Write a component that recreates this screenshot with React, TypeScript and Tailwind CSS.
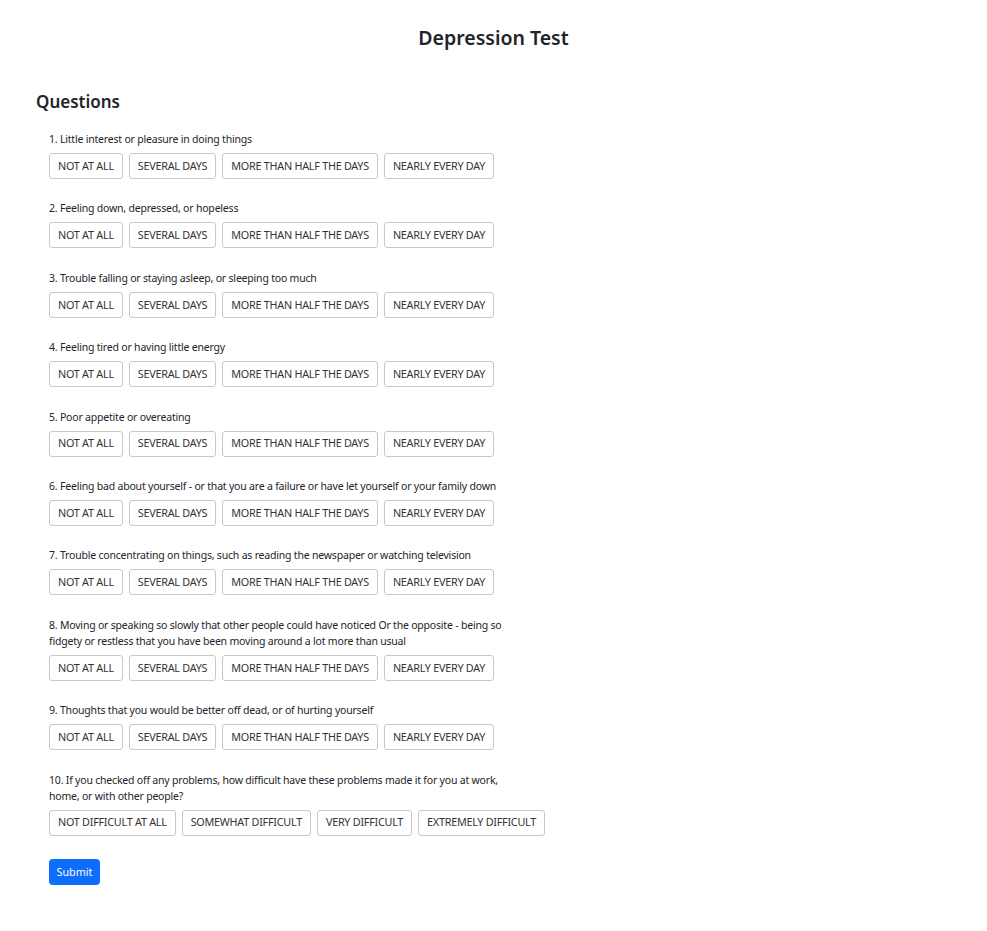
const freq = ["NOT AT ALL", "SEVERAL DAYS", "MORE THAN HALF THE DAYS", "NEARLY EVERY DAY"];
const diff = ["NOT DIFFICULT AT ALL", "SOMEWHAT DIFFICULT", "VERY DIFFICULT", "EXTREMELY DIFFICULT"];

const questions = [
  "Little interest or pleasure in doing things",
  "Feeling down, depressed, or hopeless",
  "Trouble falling or staying asleep, or sleeping too much",
  "Feeling tired or having little energy",
  "Poor appetite or overeating",
  "Feeling bad about yourself - or that you are a failure or have let yourself or your family down",
  "Trouble concentrating on things, such as reading the newspaper or watching television",
  "Moving or speaking so slowly that other people could have noticed Or the opposite - being so fidgety or restless that you have been moving around a lot more than usual",
  "Thoughts that you would be better off dead, or of hurting yourself",
  "If you checked off any problems, how difficult have these problems made it for you at work, home, or with other people?",
];

function Question({ n, text, options }: { n: number; text: string; options: string[] }) {
  return (
    <div className="mb-[21.4px]">
      <p className="max-w-[470px] text-[10.5px] leading-4 tracking-[-0.2px] text-[#212529]">
        {n}. {text}
      </p>
      <div className="mt-[6px] flex gap-[6px]">
        {options.map((o) => (
          <button
            key={o}
            className="h-[26px] rounded-[3px] border border-[#c8c8c8] bg-white px-2 text-[10.8px] tracking-[-0.25px] text-[#333]"
          >
            {o}
          </button>
        ))}
      </div>
    </div>
  );
}

export default function App() {
  return (
    <div className="min-h-[931px] bg-white font-['Noto_Sans',sans-serif] text-[#212529]">
      <h1 className="pt-[24px] text-center text-[19.5px] font-semibold leading-7">Depression Test</h1>
      <div className="px-9 pt-[38px]">
        <h2 className="text-[17px] font-semibold leading-6">Questions</h2>
        <div className="mt-[17px] pl-[13px]">
          {questions.map((q, i) => (
            <Question key={i} n={i + 1} text={q} options={i === 9 ? diff : freq} />
          ))}
          <button className="mt-[2px] h-[26px] w-[51px] rounded-[4px] bg-[#0d6efd] text-[10.8px] text-white">
            Submit
          </button>
        </div>
      </div>
    </div>
  );
}
